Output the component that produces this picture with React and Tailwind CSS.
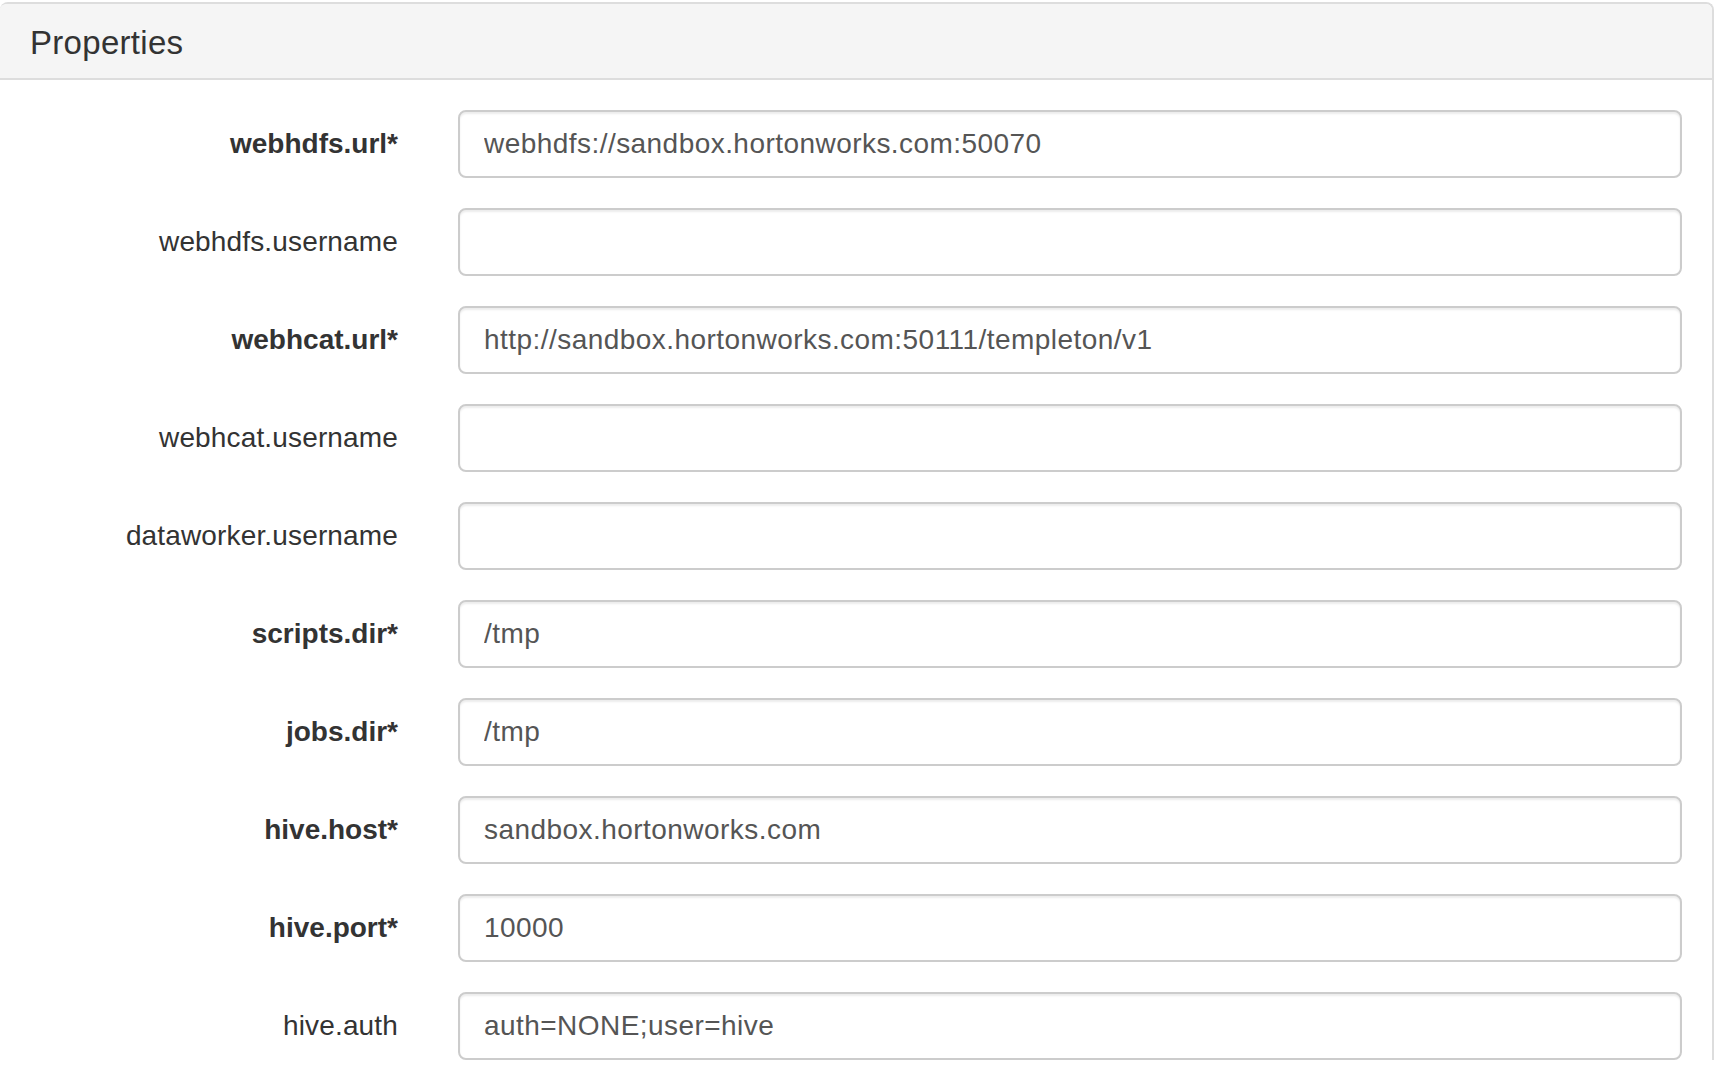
const FIELDS = [
  { name: "webhdfs.url", required: true, value: "webhdfs://sandbox.hortonworks.com:50070" },
  { name: "webhdfs.username", required: false, value: "" },
  { name: "webhcat.url", required: true, value: "http://sandbox.hortonworks.com:50111/templeton/v1" },
  { name: "webhcat.username", required: false, value: "" },
  { name: "dataworker.username", required: false, value: "" },
  { name: "scripts.dir", required: true, value: "/tmp" },
  { name: "jobs.dir", required: true, value: "/tmp" },
  { name: "hive.host", required: true, value: "sandbox.hortonworks.com" },
  { name: "hive.port", required: true, value: "10000" },
  { name: "hive.auth", required: false, value: "auth=NONE;user=hive" },
];

const FONT = { fontFamily: '"Liberation Sans", Arial, Helvetica, sans-serif' };

function PropertyRow({ field }) {
  return (
    <div className="mb-[30px] flex h-[68px] items-center">
      <label
        className={
          field.required
            ? "w-[428px] shrink-0 pr-[30px] text-right text-[28px] font-bold text-[#333]"
            : "w-[428px] shrink-0 pr-[30px] text-right text-[28px] font-normal tracking-[0.15px] text-[#333]"
        }
      >
        {field.name}
        {field.required ? "*" : ""}
      </label>
      <div className="flex-1 pl-[30px] pr-[30px]">
        <input
          readOnly
          defaultValue={field.value}
          style={FONT}
          className="block h-[68px] w-full rounded-[8px] border-2 border-[#ccc] bg-white px-[24px] text-[28px] tracking-[0.45px] text-[#555] shadow-[inset_0_2px_2px_rgba(0,0,0,0.075)] outline-none"
        />
      </div>
    </div>
  );
}

export default function App() {
  return (
    <div className="h-screen overflow-hidden bg-white pt-[2px]" style={FONT}>
      <div className="rounded-t-[8px] border-t-2 border-r-2 border-[#ddd] bg-white">
        {/* heading */}
        <div className="rounded-t-[6px] border-b-2 border-[#ddd] bg-[#f5f5f5] px-[30px] pt-[22px] pb-[18px]">
          <h3 className="text-[33px] leading-[34px] tracking-[0.3px] text-[#333]">Properties</h3>
        </div>

        {/* body */}
        <div className="pt-[30px]">
          {FIELDS.map((f) => (
            <PropertyRow key={f.name} field={f} />
          ))}
        </div>
      </div>
    </div>
  );
}
